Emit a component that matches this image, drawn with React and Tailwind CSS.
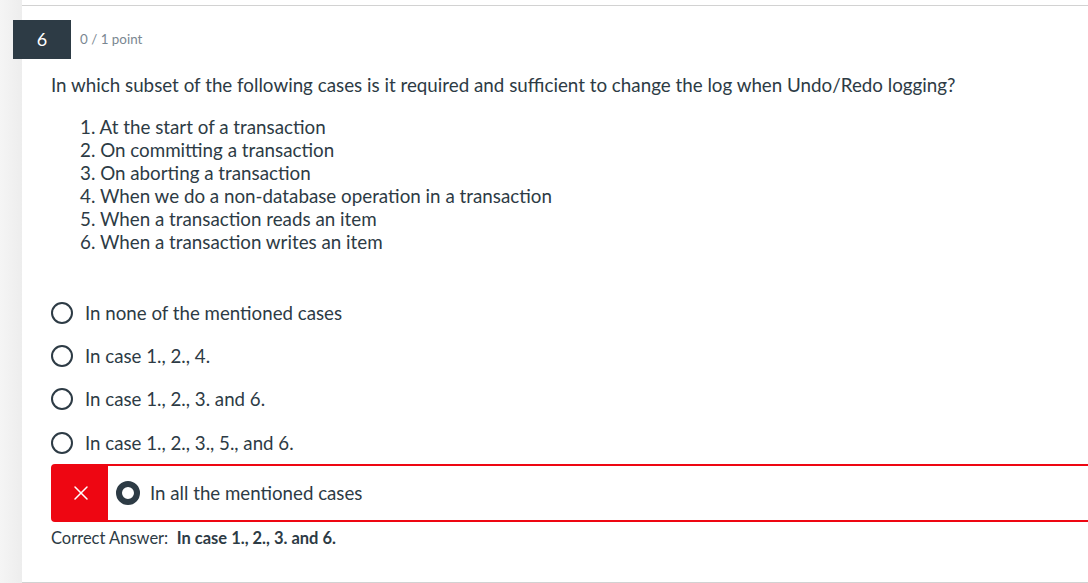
import { X } from 'lucide-react';

const listItems = [
  '1. At the start of a transaction',
  '2. On committing a transaction',
  '3. On aborting a transaction',
  '4. When we do a non-database operation in a transaction',
  '5. When a transaction reads an item',
  '6. When a transaction writes an item',
];

const options = [
  'In none of the mentioned cases',
  'In case 1., 2., 4.',
  'In case 1., 2., 3. and 6.',
  'In case 1., 2., 3., 5., and 6.',
];

const App = () => {
  return (
    <div
      className="flex h-[583px] w-full overflow-hidden bg-white text-[#2d3b45]"
      style={{ fontFamily: 'Lato, "Open Sans", sans-serif' }}
    >
      {/* left strip */}
      <div className="w-[22px] shrink-0 bg-gradient-to-r from-[#f5f5f5] to-[#ededed]" />

      {/* question card */}
      <div className="flex-1 mt-[5px] border-t border-b border-[#d2d2d2] bg-white h-[578px]">
        {/* header */}
        <div className="flex items-center pt-[14px] -ml-[9px]">
          <div className="w-[58px] h-[39px] bg-[#2d3b45] text-white flex items-center justify-center text-[18px]">
            6
          </div>
          <span className="ml-[9px] text-[13.4px] text-[#7a8791]">0 / 1 point</span>
        </div>

        <div className="pl-[29px]">
          {/* question */}
          <p className="mt-[13px] text-[18.8px] leading-[26px] whitespace-nowrap">
            In which subset of the following cases is it required and sufficient to change the log when Undo/Redo logging?
          </p>

          <ul className="mt-[17px] pl-[29px] text-[18.8px] leading-[23px]">
            {listItems.map((item) => (
              <li key={item}>{item}</li>
            ))}
          </ul>

          {/* answers */}
          <div className="mt-[38px]">
            {options.map((opt) => (
              <div key={opt} className="flex items-center h-[43.3px]">
                <span className="w-[22px] h-[22px] rounded-full border-[2.5px] border-[#2d3b45] shrink-0" />
                <span className="ml-[12px] text-[18.7px] text-[#2d3b45]">{opt}</span>
              </div>
            ))}

            {/* selected wrong answer */}
            <div className="flex items-stretch h-[58px] border-2 border-[#ee0612] rounded-l-[4px] -mr-[20px]">
              <div className="w-[55px] bg-[#ee0612] flex items-center justify-center">
                <X size={24} strokeWidth={1.5} className="text-white" />
              </div>
              <div className="flex items-center pl-[8px]">
                <span className="w-[24px] h-[24px] rounded-full border-[6px] border-[#2d3b45] bg-white shrink-0" />
                <span className="ml-[10px] text-[18.7px]">In all the mentioned cases</span>
              </div>
            </div>
          </div>

          <div className="mt-[6px] text-[16.5px] leading-[20px]">
            Correct Answer:&nbsp; <span className="font-bold">In case 1., 2., 3. and 6.</span>
          </div>
        </div>
      </div>
    </div>
  );
};

export default App;
